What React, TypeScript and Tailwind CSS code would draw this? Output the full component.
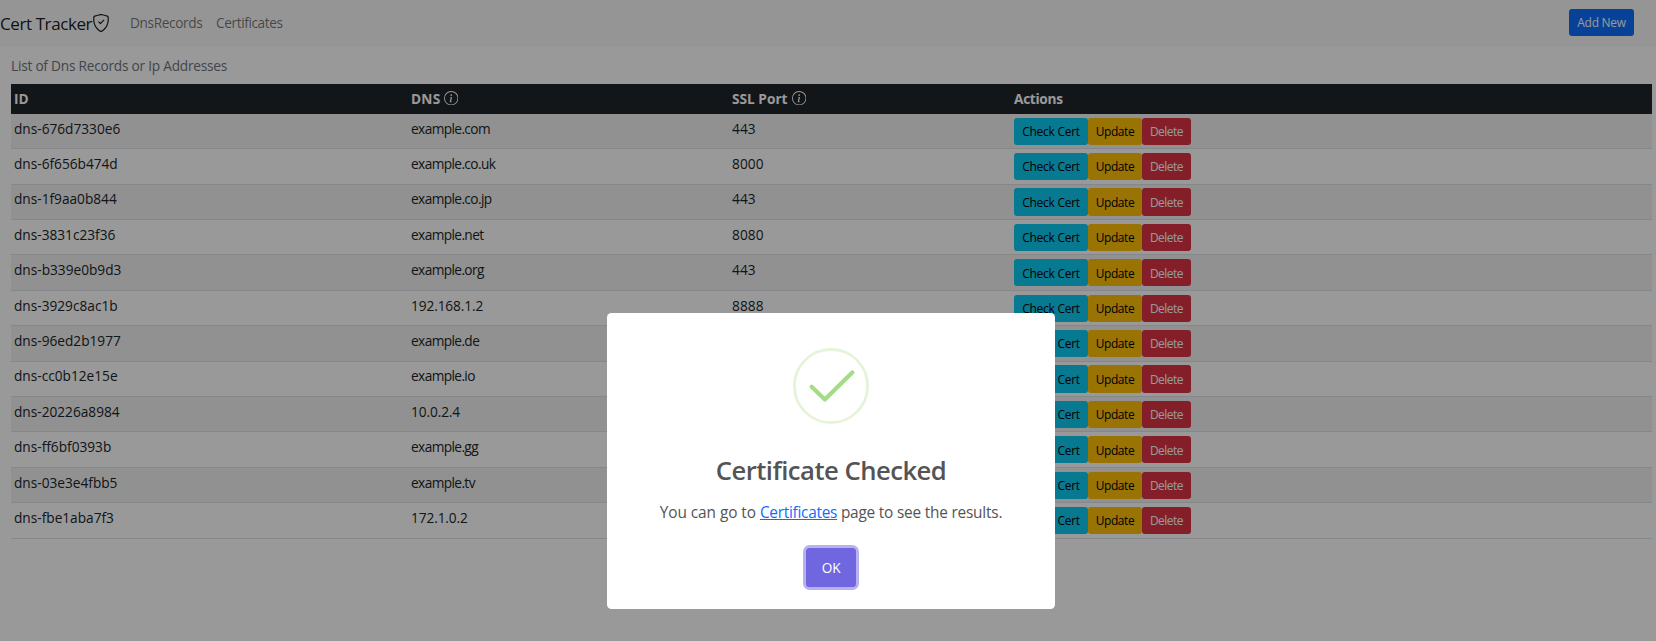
import React from "react";
import { BsInfoCircle, BsShieldCheck } from "react-icons/bs";

type DnsRecord = { id: string; dns: string; port?: string };

const records: DnsRecord[] = [
  { id: "dns-676d7330e6", dns: "example.com", port: "443" },
  { id: "dns-6f656b474d", dns: "example.co.uk", port: "8000" },
  { id: "dns-1f9aa0b844", dns: "example.co.jp", port: "443" },
  { id: "dns-3831c23f36", dns: "example.net", port: "8080" },
  { id: "dns-b339e0b9d3", dns: "example.org", port: "443" },
  { id: "dns-3929c8ac1b", dns: "192.168.1.2", port: "8888" },
  { id: "dns-96ed2b1977", dns: "example.de" },
  { id: "dns-cc0b12e15e", dns: "example.io" },
  { id: "dns-20226a8984", dns: "10.0.2.4" },
  { id: "dns-ff6bf0393b", dns: "example.gg" },
  { id: "dns-03e3e4fbb5", dns: "example.tv" },
  { id: "dns-fbe1aba7f3", dns: "172.1.0.2" },
];

const columns = "grid grid-cols-[397px_321px_282px_1fr] pl-[3px]";
const button = "flex h-[27.25px] items-center justify-center rounded-[3px] pt-[1.5px] text-[11.97px] leading-[18px]";

function Navbar() {
  return (
    <nav className="flex h-[47px] items-center bg-[#f8f9fa] pb-[2px] pr-[22px]">
      <a className="flex items-center text-[17.1px] leading-[27px] text-black/90">
        <span className="w-[92px] whitespace-nowrap pt-[2px] tracking-[-0.45px]">Cert Tracker</span>
        <BsShieldCheck className="size-[18px]" />
      </a>
      <div className="ml-5 flex text-[13.68px] leading-[22px] text-black/55">
        <a className="w-[86px] tracking-[-0.37px]">DnsRecords</a>
        <a className="tracking-[-0.4px]">Certificates</a>
      </div>
      <button className={`${button} ml-auto w-[65px] bg-[#0d6efd] tracking-[-0.28px] text-white`}>Add New</button>
    </nav>
  );
}

function RecordsTable() {
  return (
    <div className="ml-[11px] mr-1">
      <div className={`${columns} h-[29.75px] items-center bg-[#212529] text-[13.68px] font-bold text-white`}>
        <div>ID</div>
        <div className="flex items-center">
          <span className="w-[33px] tracking-[0.2px]">DNS</span>
          <BsInfoCircle className="mb-[2px] size-[14.4px]" />
        </div>
        <div className="flex items-center">
          <span className="w-[60px] whitespace-nowrap">SSL Port</span>
          <BsInfoCircle className="mb-[2px] size-[14.4px]" />
        </div>
        <div className="tracking-[-0.3px]">Actions</div>
      </div>
      {records.map((r) => (
        <div
          key={r.id}
          className={`${columns} h-[35.42px] border-b border-[#dee2e6] pt-[3.77px] text-[13.68px] leading-[22px] odd:bg-white even:bg-[#f2f2f2]`}
        >
          <div>{r.id}</div>
          <div className={/^\d/.test(r.dns) ? "tracking-[-0.1px]" : "tracking-[-0.6px]"}>{r.dns}</div>
          <div className="tracking-[0.08px]">{r.port}</div>
          <div className="flex">
            <button className={`${button} w-[74px] bg-[#0dcaf0] tracking-[-0.26px] text-black`}>Check Cert</button>
            <button className={`${button} w-[54px] bg-[#ffc107] tracking-[-0.4px] text-black`}>Update</button>
            <button className={`${button} w-[49px] bg-[#dc3545] tracking-[-0.5px] text-white`}>Delete</button>
          </div>
        </div>
      ))}
    </div>
  );
}

function CheckedDialog() {
  return (
    <div className="absolute inset-0 bg-black/40 pl-[607px] pt-[313px]">
      <div className="flex h-[296px] w-[448px] flex-col items-center rounded-[4.5px] bg-white pt-[35px] text-[#545454]">
        <svg className="size-[76px]" viewBox="0 0 76 76" fill="none">
          <circle cx="38" cy="38" r="36.6" stroke="#a5dc86" strokeOpacity="0.3" strokeWidth="2.8" />
          <path d="M18.6 38.8 31.8 51.6 59.3 24.5" stroke="#a5dc86" strokeWidth="4.2" strokeLinecap="round" strokeLinejoin="round" />
        </svg>
        <h2 className="mt-[29px] text-[25.65px] font-semibold leading-[36px] tracking-[-0.52px]">Certificate Checked</h2>
        <p className="mt-[12px] whitespace-nowrap text-[15.39px] leading-6 tracking-[-0.17px]">
          <span className="tracking-[-0.05px]">You can go to </span>
          <a className="tracking-[-0.27px] text-[#0d6efd] underline">Certificates</a>
          <span className="tracking-[-0.2px]"> page to see the results.</span>
        </p>
        <button className="mt-[23px] h-[39px] w-[50px] rounded-[3.6px] bg-[#7066e0] pt-[2px] text-[13.68px] tracking-[-0.3px] text-white ring-[3px] ring-[#7066e0]/50">
          OK
        </button>
      </div>
    </div>
  );
}

export default function App() {
  return (
    <div className="relative h-[641px] w-full overflow-hidden bg-white font-['Open_Sans',sans-serif] text-[#212529]">
      <Navbar />
      <p className="ml-[11px] flex h-[37px] items-center pt-px text-[13.68px] tracking-[-0.23px] text-[#6c757d]">
        List of Dns Records or Ip Addresses
      </p>
      <RecordsTable />
      <CheckedDialog />
    </div>
  );
}
